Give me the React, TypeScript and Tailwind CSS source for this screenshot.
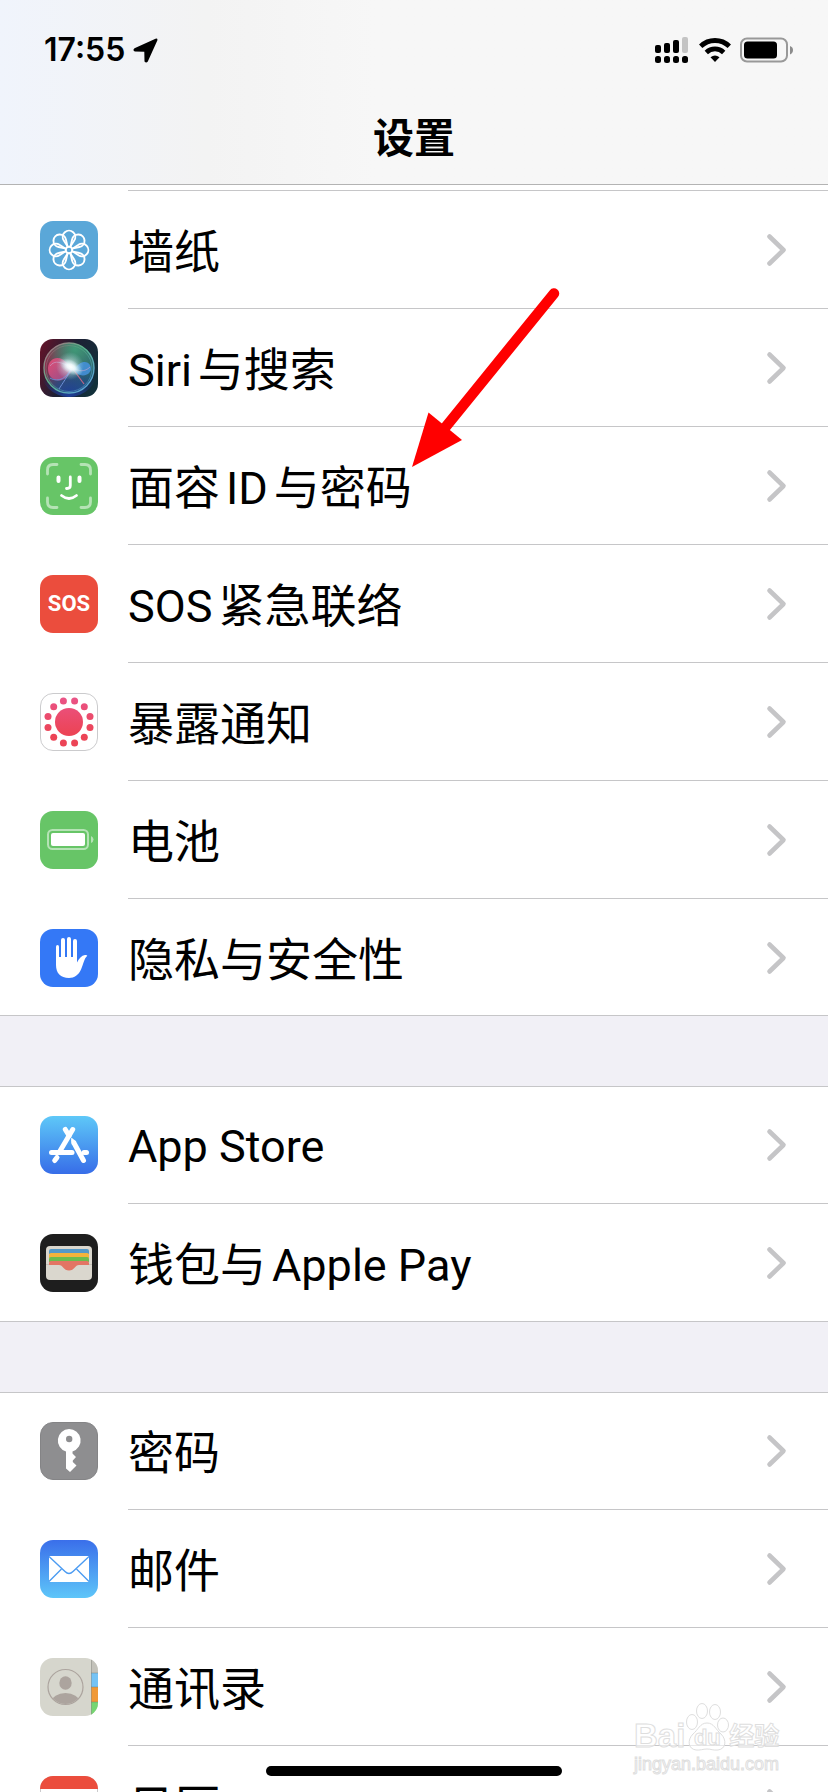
import type { ReactNode } from "react";

type Row = { label: string[]; icon: ReactNode };

const SquareClip = ({ id }: { id: string }) => (
  <clipPath id={id}>
    <rect width="58" height="58" rx="13" />
  </clipPath>
);

const Icon = ({ children }: { children: ReactNode }) => (
  <svg viewBox="0 0 58 58" className="size-[58px] shrink-0" aria-hidden="true">
    {children}
  </svg>
);

const WallpaperIcon = () => (
  <Icon>
    <rect width="58" height="58" rx="13" fill="#5aa7d8" />
    <g fill="none" stroke="#fff" strokeWidth="1.9">
      {[0, 45, 90, 135, 180, 225, 270, 315].map((a) => (
        <path
          key={a}
          transform={`rotate(${a} 29 29)`}
          d="M28 26 L23.8 19.5 A6.3 6.3 0 1 1 34.2 19.5 L30 26"
        />
      ))}
      <circle cx="29" cy="29" r="3.2" />
    </g>
  </Icon>
);

const SiriIcon = () => (
  <Icon>
    <defs>
      <SquareClip id="siri-clip" />
      <linearGradient id="siri-bg" x1="0" y1="0.2" x2="1" y2="0.6">
        <stop offset="0" stopColor="#5e1429" />
        <stop offset="0.5" stopColor="#1d2034" />
        <stop offset="1" stopColor="#12303a" />
      </linearGradient>
      <linearGradient id="siri-orb" x1="0.1" y1="0.3" x2="0.9" y2="0.7">
        <stop offset="0" stopColor="#8c2a4a" />
        <stop offset="0.5" stopColor="#3b5560" />
        <stop offset="1" stopColor="#235c72" />
      </linearGradient>
      <radialGradient id="siri-green" cx="0.62" cy="0.12" r="0.65">
        <stop offset="0" stopColor="#3f9a78" />
        <stop offset="1" stopColor="#3f9a78" stopOpacity="0" />
      </radialGradient>
      <radialGradient id="siri-blue" cx="0.5" cy="1" r="0.55">
        <stop offset="0" stopColor="#1f3f9c" />
        <stop offset="1" stopColor="#1f3f9c" stopOpacity="0" />
      </radialGradient>
      <radialGradient id="siri-glow">
        <stop offset="0" stopColor="#fff" />
        <stop offset="0.35" stopColor="#effcff" stopOpacity="0.9" />
        <stop offset="1" stopColor="#a8dfe4" stopOpacity="0" />
      </radialGradient>
      <linearGradient id="siri-ring" x1="0" y1="0" x2="1" y2="1">
        <stop offset="0" stopColor="#b4627c" />
        <stop offset="0.45" stopColor="#59b68c" />
        <stop offset="1" stopColor="#5b9bea" />
      </linearGradient>
      <linearGradient id="siri-left" x1="0" y1="0" x2="1" y2="1">
        <stop offset="0" stopColor="#f0507c" />
        <stop offset="1" stopColor="#a3508f" />
      </linearGradient>
    </defs>
    <g clipPath="url(#siri-clip)">
      <rect width="58" height="58" fill="url(#siri-bg)" />
      <circle cx="29" cy="29" r="25" fill="url(#siri-orb)" />
      <circle cx="29" cy="29" r="25" fill="url(#siri-green)" />
      <circle cx="29" cy="29" r="29" fill="url(#siri-blue)" />
      <path
        d="M8 29 C9 18 20 15 28 25 L33 30 C29 37 24 43 16 41 C10 39 8 35 8 29Z"
        fill="url(#siri-left)"
        opacity="0.85"
      />
      <path d="M34 31 C39 22 47 21 50 26 C54 34 44 40 36 34Z" fill="#4592dd" opacity="0.85" />
      <path
        d="M10 27 C15 20 22 24 31 28 C39 33 45 33 50 28"
        fill="none"
        stroke="#c8a6d0"
        opacity="0.6"
      />
      <path d="M10 39 C19 44 27 39 32 28 C28 37 22 45 19 50" fill="none" stroke="#6d8fd6" />
      <path d="M33 30 L44 45" stroke="#bd6686" strokeWidth="1.2" />
      <ellipse cx="31" cy="28" rx="13" ry="7" fill="url(#siri-glow)" transform="rotate(28 31 28)" />
      <circle cx="30" cy="27" r="14" fill="url(#siri-glow)" opacity="0.6" />
      <circle cx="29" cy="29" r="25" fill="none" stroke="url(#siri-ring)" strokeWidth="1.4" />
      <circle cx="29" cy="29.5" r="23" fill="none" stroke="url(#siri-ring)" opacity="0.5" />
    </g>
  </Icon>
);

const FaceIdIcon = () => (
  <Icon>
    <rect width="58" height="58" rx="13" fill="#67c567" />
    <g fill="none" strokeLinecap="round">
      <path
        d="M7.5 17 V13 Q7.5 7.5 13 7.5 H17 M41 7.5 H45 Q50.5 7.5 50.5 13 V17 M50.5 41 V45 Q50.5 50.5 45 50.5 H41 M17 50.5 H13 Q7.5 50.5 7.5 45 V41"
        stroke="#b5e3b5"
        strokeWidth="2.8"
      />
      <path d="M18.5 20.5 V24 M39.5 20.5 V24" stroke="#fff" strokeWidth="4" />
      <path d="M30.3 20 V28.5 Q30.3 31.500 27 31.5 H26.5" stroke="#fff" strokeWidth="2.8" />
      <path d="M21.5 38.5 Q29 44.5 36.5 38.5" stroke="#fff" strokeWidth="2.8" />
    </g>
  </Icon>
);

const SosIcon = () => (
  <span className="flex size-[58px] shrink-0 items-center justify-center rounded-[13px] bg-[#eb4d3d] font-['Roboto',sans-serif] text-[22px] font-bold leading-none text-white">
    SOS
  </span>
);

const ExposureIcon = () => (
  <Icon>
    <defs>
      <linearGradient id="exposure-fill" gradientUnits="userSpaceOnUse" x1="0" y1="4" x2="0" y2="40">
        <stop offset="0" stopColor="#ea5488" />
        <stop offset="1" stopColor="#ec4456" />
      </linearGradient>
    </defs>
    <rect x="0.5" y="0.5" width="57" height="57" rx="12.5" fill="#fff" stroke="#cbcbcd" />
    <g fill="url(#exposure-fill)">
      <circle cx="29" cy="29" r="14" />
      <circle cx="34.6" cy="8" r="3.5" />
      <circle cx="44.3" cy="13.7" r="3.5" />
      <circle cx="50" cy="23.4" r="3.5" />
      <circle cx="50" cy="34.6" r="3.5" />
      <circle cx="44.3" cy="44.3" r="3.5" />
      <circle cx="34.6" cy="50" r="3.5" />
      <circle cx="23.4" cy="50" r="3.5" />
      <circle cx="13.7" cy="44.3" r="3.5" />
      <circle cx="8" cy="34.6" r="3.5" />
      <circle cx="8" cy="23.4" r="3.5" />
      <circle cx="13.7" cy="13.7" r="3.5" />
      <circle cx="23.4" cy="8" r="3.5" />
    </g>
  </Icon>
);

const BatteryIcon = () => (
  <Icon>
    <rect width="58" height="58" rx="13" fill="#67c567" />
    <rect x="8" y="19" width="40" height="19" rx="4.5" fill="none" stroke="#b5e3b5" strokeWidth="2" />
    <rect x="11" y="22" width="34" height="13" rx="2" fill="#fff" />
    <path d="M51 25 Q53.5 26 53.5 28.5 Q53.5 31 51 32Z" fill="#b5e3b5" />
  </Icon>
);

const PrivacyIcon = () => (
  <Icon>
    <rect width="58" height="58" rx="13" fill="#3478f6" />
    <g stroke="#fff" strokeLinecap="round">
      <path d="M17.5 17.5 V34" strokeWidth="3" />
      <path d="M23 11 V34 M29 10 V34 M35 12 V34" strokeWidth="4" />
    </g>
    <path
      d="M16 28 H37 V33.5 C39 29.5 41.5 26.5 45 26 Q47 25.8 47.3 26.7 C44 29.5 43.5 35 41 40.5 C38.5 46 34.5 49 29 49 C20.5 49 16 44 16 36Z"
      fill="#fff"
    />
  </Icon>
);

const AppStoreIcon = () => (
  <Icon>
    <defs>
      <linearGradient id="store-bg" x1="0" y1="0" x2="0" y2="1">
        <stop offset="0" stopColor="#5ec8f8" />
        <stop offset="1" stopColor="#376de8" />
      </linearGradient>
    </defs>
    <rect width="58" height="58" rx="13" fill="url(#store-bg)" />
    <g stroke="#fff" strokeWidth="5" strokeLinecap="round" fill="none">
      <path d="M25.3 13.5 L29 19.5" />
      <path d="M32.7 13.5 L20 35" />
      <path d="M11.5 36.5 H32" />
      <path d="M17 41.5 L14.7 44.5" />
      <path d="M44 36.5 H46.5" />
      <path d="M34 27 L43.5 44.5" />
    </g>
    <path d="M31.3 21.5 L36.3 25.5 L32 29 Q30.5 25 31.3 21.5Z" fill="#fff" />
  </Icon>
);

const WalletIcon = () => (
  <Icon>
    <rect width="58" height="58" rx="13" fill="#1e1e1e" />
    <rect x="6" y="12" width="46" height="34" rx="4" fill="#dad7ce" />
    <path d="M9 20 V17 Q9 15 11 15 H47 Q49 15 49 17 V20Z" fill="#5499c8" />
    <path d="M9 24 V21 Q9 19 11 19 H47 Q49 19 49 21 V24Z" fill="#f3b33c" />
    <path d="M9 28 V25 Q9 23 11 23 H47 Q49 23 49 25 V28Z" fill="#6cbc4e" />
    <path
      d="M9 31 V29 Q9 27 11 27 H47 Q49 27 49 29 V31 H39 C35 31 34.5 36.5 29 36.5 C23.5 36.5 23 31 19 31Z"
      fill="#e37564"
    />
    <path d="M6 30.5 H9 M49 30.5 H52" stroke="#bdbab2" strokeWidth="0.8" />
  </Icon>
);

const KeyIcon = () => (
  <Icon>
    <rect x="0.5" y="0.5" width="57" height="57" rx="12.5" fill="#8e8e90" stroke="#848486" />
    <path
      d="M29 7 A11.5 11.5 0 0 1 32.5 29.5 V31.5 L36 35 L32.8 38.5 V40 L36.5 43.5 L30 50 L26 46.5 V29.5 A11.5 11.5 0 0 1 29 7Z"
      fill="#fff"
    />
    <circle cx="29.2" cy="17" r="3.2" fill="#8e8e90" />
  </Icon>
);

const MailIcon = () => (
  <Icon>
    <defs>
      <linearGradient id="mail-bg" x1="0" y1="0" x2="0" y2="1">
        <stop offset="0" stopColor="#3a6fea" />
        <stop offset="1" stopColor="#5ec6f9" />
      </linearGradient>
    </defs>
    <rect width="58" height="58" rx="13" fill="url(#mail-bg)" />
    <rect x="9" y="16" width="40" height="26" rx="1" fill="#fff" />
    <g fill="none" stroke="#4b9bf2" strokeWidth="1.4">
      <path d="M9 16.5 L25 31.5 Q29 35.5 33 31.5 L49 16.5" />
      <path d="M9 41.5 L21.5 29 M49 41.5 L36.5 29" />
    </g>
  </Icon>
);

const ContactsIcon = () => (
  <Icon>
    <defs>
      <SquareClip id="contacts-clip" />
      <clipPath id="avatar-clip">
        <circle cx="25.5" cy="29" r="17" />
      </clipPath>
    </defs>
    <g clipPath="url(#contacts-clip)">
      <rect width="58" height="58" fill="#d6d6cd" />
      <rect x="51" width="7" height="15" fill="#c3c2ba" />
      <rect x="51" y="15" width="7" height="14" fill="#75c4f5" />
      <rect x="51" y="29" width="7" height="15" fill="#f09a38" />
      <rect x="51" y="44" width="7" height="14" fill="#76d672" />
      <path d="M51.5 0 V58" stroke="#8a8a84" opacity="0.5" />
      <path d="M51 15 H58 M51 29 H58 M51 44 H58" stroke="#6b7a7a" strokeWidth="0.7" opacity="0.6" />
    </g>
    <circle cx="25.5" cy="29" r="17.5" fill="none" stroke="#aca49e" strokeWidth="1.2" />
    <ellipse cx="25.5" cy="25" rx="6.2" ry="6.8" fill="#aca49e" />
    <ellipse cx="25.5" cy="44" rx="14" ry="9" fill="#aca49e" clipPath="url(#avatar-clip)" />
  </Icon>
);

const CalendarIcon = () => (
  <Icon>
    <defs>
      <SquareClip id="calendar-clip" />
    </defs>
    <rect x="0.5" y="0.5" width="57" height="57" rx="12.5" fill="#fff" stroke="#cbcbcd" />
    <rect width="58" height="13" fill="#eb4d3d" clipPath="url(#calendar-clip)" />
  </Icon>
);

// Labels are split into runs so that Latin words get a narrow gap beside Chinese text.
const groups: Row[][] = [
  [
    { label: ["墙纸"], icon: <WallpaperIcon /> },
    { label: ["Siri", "与搜索"], icon: <SiriIcon /> },
    { label: ["面容", "ID", "与密码"], icon: <FaceIdIcon /> },
    { label: ["SOS", "紧急联络"], icon: <SosIcon /> },
    { label: ["暴露通知"], icon: <ExposureIcon /> },
    { label: ["电池"], icon: <BatteryIcon /> },
    { label: ["隐私与安全性"], icon: <PrivacyIcon /> },
  ],
  [
    { label: ["App Store"], icon: <AppStoreIcon /> },
    { label: ["钱包与", "Apple Pay"], icon: <WalletIcon /> },
  ],
  [
    { label: ["密码"], icon: <KeyIcon /> },
    { label: ["邮件"], icon: <MailIcon /> },
    { label: ["通讯录"], icon: <ContactsIcon /> },
    { label: ["日历"], icon: <CalendarIcon /> },
  ],
];

const isLatin = (run: string) => /^[A-Za-z]/.test(run);

function SettingsRow({ row, divided }: { row: Row; divided: boolean }) {
  return (
    <li>
      <a href="#" className="flex">
        <span
          className={
            divided
              ? "mt-[2px] flex h-[116px] w-32 shrink-0 items-center pl-10"
              : "flex h-[116px] w-32 shrink-0 items-center pl-10"
          }
        >
          {row.icon}
        </span>
        <span
          className={
            divided
              ? "flex h-[118px] flex-1 items-center justify-between border-t border-[#c6c6c8] pr-10 pt-px"
              : "flex h-[116px] flex-1 items-center justify-between pr-10"
          }
        >
          <span className="flex items-baseline gap-1.5 whitespace-nowrap pt-1 leading-[60px]">
            {row.label.map((run) => (
              <span key={run} className={isLatin(run) ? "text-[45px]" : "text-[46px]"}>
                {run}
              </span>
            ))}
          </span>
          <svg viewBox="0 0 22 34" className="h-[34px] w-[22px]" aria-hidden="true">
            <path
              d="M3.5 3.5 L17.5 17 L3.5 30.5"
              fill="none"
              stroke="#c5c5c7"
              strokeWidth="4.6"
              strokeLinecap="round"
              strokeLinejoin="round"
            />
          </svg>
        </span>
      </a>
    </li>
  );
}

function StatusBar() {
  return (
    <div className="flex h-[100px] items-center justify-between pl-11 pr-[34px]">
      <div className="flex items-center gap-2">
        <time className="font-['Inter',sans-serif] text-[32px] font-semibold leading-10">17:55</time>
        <svg viewBox="0 0 25 25" className="size-[25px]" aria-hidden="true">
          <path d="M1.5 10.2 L22.5 .8 Q25 0 24.3 2.6 L14.8 23.5 Q13.2 25.5 11.5 23.5 L11.3 13.7 L1.8 13.500 Q-.8 12.2 1.5 10.2Z" />
        </svg>
      </div>
      <div className="flex items-center">
        <svg viewBox="0 0 33 26" className="h-[26px] w-[33px]" aria-hidden="true">
          <rect x="0" y="8" width="6" height="8" rx="2" />
          <rect x="9" y="6" width="6" height="10" rx="2" />
          <rect x="18" y="3" width="6" height="13" rx="2" />
          <rect x="27" y="0" width="6" height="16" rx="2" fill="#c4c4c4" />
          <rect x="0" y="19" width="6" height="7" rx="2.5" />
          <rect x="9" y="19" width="6" height="7" rx="2.5" />
          <rect x="18" y="19" width="6" height="7" rx="2.5" />
          <rect x="27" y="19" width="6" height="7" rx="2.5" />
        </svg>
        <svg viewBox="0 0 32 24" className="ml-[11px] h-6 w-8" aria-hidden="true">
          <g fill="none" stroke="#000" strokeWidth="4.8">
            <path d="M1.7 8.3 A20.5 20.5 0 0 1 30.3 8.3" />
            <path d="M7.3 14.4 A12.6 12.6 0 0 1 24.7 14.4" />
          </g>
          <path d="M16 24 L11.500 19.3 Q16 15.5 20.5 19.3Z" />
        </svg>
        <svg viewBox="0 0 54 26" className="ml-[9px] h-[26px] w-[54px]" aria-hidden="true">
          <rect x="1" y="1.5" width="46" height="23" rx="6" fill="none" stroke="#999" strokeWidth="2" />
          <rect x="4" y="4.5" width="33" height="17" rx="3.5" />
          <path d="M50 9 Q53 10 53 13 Q53 16 50 17.5Z" fill="#8c8c8c" />
        </svg>
      </div>
    </div>
  );
}

function Watermark() {
  return (
    <div
      aria-hidden="true"
      className="pointer-events-none absolute bottom-4 right-[44px] flex w-[150px] flex-col font-['Liberation_Sans','Noto_Sans_CJK_SC',sans-serif] text-white/60 [-webkit-text-stroke:1px_#dedede]"
    >
      <div className="flex h-[50px] items-end font-bold">
        <span className="text-[33px] leading-8">Bai</span>
        <span className="relative flex h-[50px] w-[44px] items-end justify-center">
          <svg viewBox="0 0 44 50" className="absolute inset-0 h-[50px] w-[44px]">
            <g fill="#fff" fillOpacity="0.6" stroke="#dedede">
              <ellipse cx="7" cy="20" rx="5.5" ry="7.5" />
              <ellipse cx="17" cy="9" rx="5.5" ry="7.5" />
              <ellipse cx="30" cy="10" rx="5.5" ry="7.5" />
              <ellipse cx="38" cy="23" rx="5.5" ry="7" />
              <path d="M22 21 C29 21 31 28 36 32 C42 38 41 47 33 48 C28 48.5 26 47 22 47 C18 47 15 48.5 11 48 C3 47 2 38 8 32 C13 28 15 21 22 21Z" />
            </g>
          </svg>
          <span className="relative text-[22px] leading-7">du</span>
        </span>
        <span className="text-[25px] leading-8">经验</span>
      </div>
      <span className="text-[18px] leading-6">jingyan.baidu.com</span>
    </div>
  );
}

export default function App() {
  return (
    <div className="relative flex h-screen flex-col overflow-hidden bg-[#f1f0f6] font-['Roboto','Noto_Sans_CJK_SC',sans-serif] text-black">
      <header className="shrink-0 border-b border-[#b3b3b3] bg-linear-to-r from-[#f0f4fc] via-[#f3f3f3] via-25% to-[#f7f7f7] to-45% pb-[5px]">
        <StatusBar />
        <h1 className="text-center text-[41px] font-bold leading-[79px]">设置</h1>
      </header>
      <main className="min-h-0 flex-1 overflow-hidden">
        {groups.map((rows, g) => (
          <ul
            key={g}
            className={
              g === 0
                ? "border-b border-[#c6c6c8] bg-white pt-[5px] *:last:-mb-px"
                : "mt-[70px] border-y border-[#c6c6c8] bg-white"
            }
          >
            {rows.map((row, i) => (
              <SettingsRow key={row.label.join("")} row={row} divided={g === 0 || i > 0} />
            ))}
          </ul>
        ))}
      </main>
      <svg
        viewBox="0 0 154 188"
        className="pointer-events-none absolute left-[410px] top-[284px] h-[188px] w-[154px]"
        aria-hidden="true"
      >
        <path d="M144 9.5 L34 145" stroke="#f00" strokeWidth="10.5" strokeLinecap="round" />
        <path d="M2 183 L18.5 128.5 L52 156Z" fill="#f00" />
      </svg>
      <Watermark />
      <div className="absolute bottom-4 left-1/2 h-[10px] w-[296px] -translate-x-1/2 rounded-full bg-black" />
    </div>
  );
}
